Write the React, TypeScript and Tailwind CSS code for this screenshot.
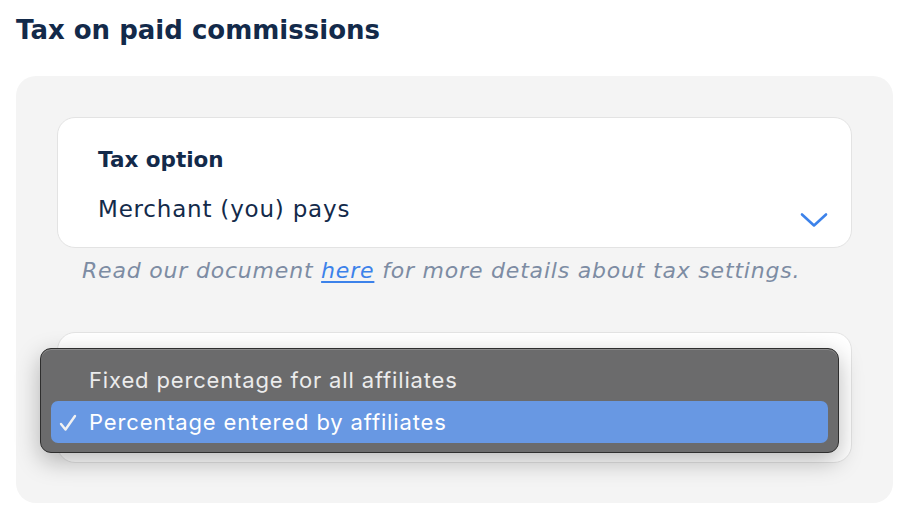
import React from "react";

export default function App() {
  const pop = { fontFamily: '"DejaVu Sans", "Open Sans", sans-serif' };
  return (
    <div className="w-[906px] h-[528px] bg-white overflow-hidden" style={pop}>
      <div className="pl-4 pt-[12px] h-[76px]">
        <h1 className="text-[26px] leading-[36px] font-bold text-[#132a4a]">
          Tax on paid commissions
        </h1>
      </div>
      <div className="mx-4 w-[877px] rounded-[20px] bg-[#f4f4f4] px-[41px] pt-[41px] pb-[40px]">
        <div className="relative h-[131px] rounded-[18px] border border-[#e3e3e3] bg-white pl-[40px] pr-[24px]">
          <div className="pt-[27px] text-[21.5px] leading-[30px] font-bold text-[#132a4a]">Tax option</div>
          <div className="pt-[19px] text-[23px] leading-[30px] tracking-[0.8px] text-[#132a4a]">Merchant (you) pays</div>
          <svg
            className="absolute right-[23px] top-[94px]"
            width="28"
            height="16"
            viewBox="0 0 28 16"
            fill="none"
          >
            <path d="M2 2.5 L14 13.5 L26 2.5" stroke="#3c82ea" strokeWidth="2.6" strokeLinecap="round" strokeLinejoin="round" />
          </svg>
        </div>
        <div className="pl-[25px] pt-[8px] h-[84px] text-[22px] leading-[30px] tracking-[0.8px] italic text-[#7d8ca3]">
          Read our document{" "}
          <a href="#" className="text-[#3c82ea] underline underline-offset-[3px]">
            here
          </a>{" "}
          for more details about tax settings.
        </div>
        <div className="relative h-[131px] rounded-[18px] border border-[#e3e3e3] bg-white">
          <div
            className="absolute left-[-18px] top-[15px] w-[799px] h-[105px] rounded-[11px] border border-[#2e2e2e] bg-[#6b6b6c] px-[10px] py-[10px] shadow-[0_8px_24px_rgba(0,0,0,0.28),inset_0_1px_0_rgba(255,255,255,0.22)]"
            style={{ fontFamily: 'Inter, "Liberation Sans", sans-serif' }}
          >
            <div className="h-[42px] flex items-center pl-[38px] text-[22px] tracking-[0.85px] text-[#ececec]">
              Fixed percentage for all affiliates
            </div>
            <div className="relative h-[42px] flex items-center pl-[38px] rounded-[7px] bg-[#6898e3] text-[22px] tracking-[0.85px] text-white">
              <svg className="absolute left-[8px] top-[13px]" width="18" height="18" viewBox="0 0 18 18" fill="none">
                <path d="M2 10 L6.5 15.5 L16 2" stroke="#f2f2f2" strokeWidth="2.4" strokeLinecap="round" strokeLinejoin="round" />
              </svg>
              Percentage entered by affiliates
            </div>
          </div>
        </div>
      </div>
    </div>
  );
}
